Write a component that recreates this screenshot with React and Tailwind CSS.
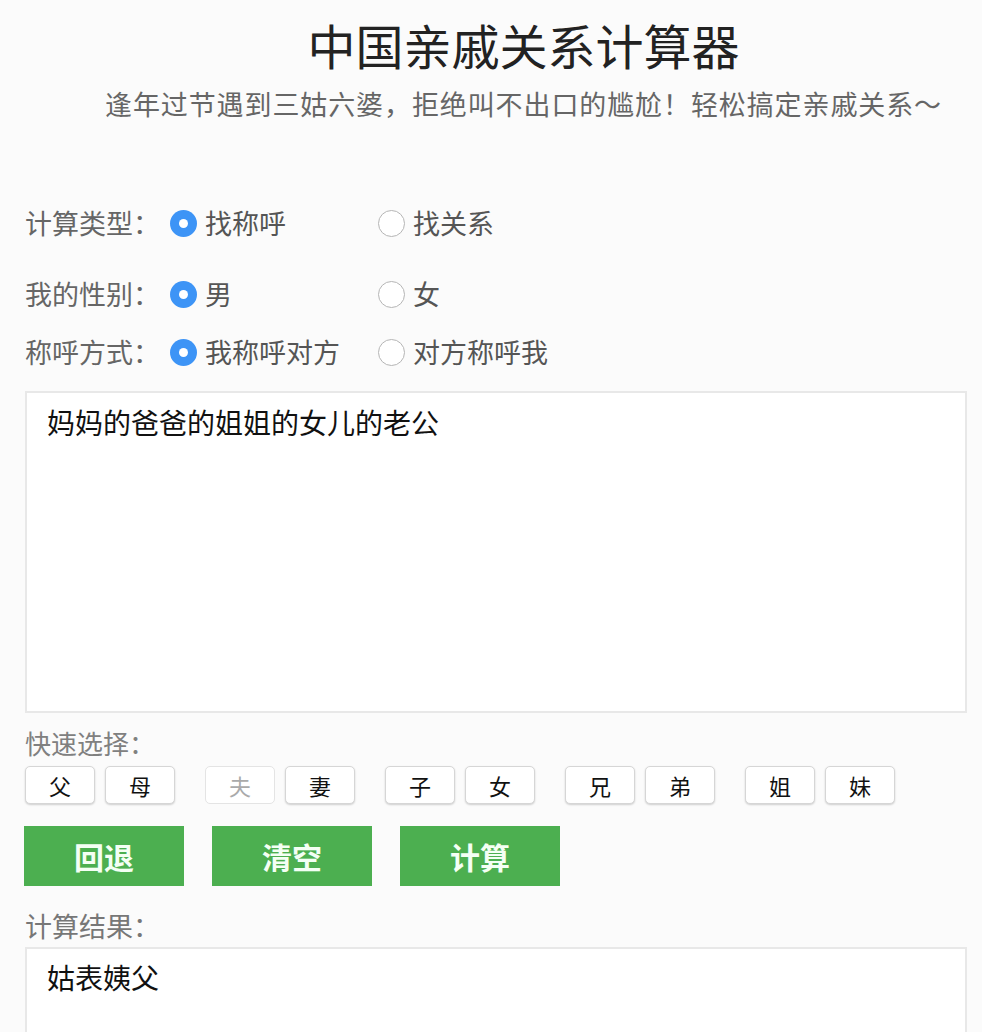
import React from "react";

const FONT = { fontFamily: '"Noto Sans CJK SC", "Noto Sans", sans-serif' };

function Radio({ checked, label, width }) {
  return (
    <label className={`flex items-center gap-[8px] ${width}`}>
      {checked ? (
        <span className="w-[27px] h-[27px] rounded-full bg-[#3d94f6] flex items-center justify-center shrink-0">
          <span className="w-[9px] h-[9px] rounded-full bg-white" />
        </span>
      ) : (
        <span className="w-[27px] h-[27px] rounded-full bg-white border border-[#b5b5b5] shrink-0" />
      )}
      <span className="text-[27px] leading-[36px] text-[#555]">{label}</span>
    </label>
  );
}

function Row({ label, options, className }) {
  return (
    <div className={`flex items-center h-[40px] ${className}`}>
      <div className="w-[145px] text-[27px] leading-[36px] text-[#666]">{label}</div>
      <Radio checked label={options[0]} width="w-[208px]" />
      <Radio label={options[1]} />
    </div>
  );
}

function Key({ ch, disabled }) {
  return (
    <button
      className={`w-[70px] h-[38px] rounded-[5px] bg-white border shadow-[0_1px_2px_rgba(0,0,0,0.18)] text-[22px] leading-none ${
        disabled ? "text-[#aaa] border-[#e4e4e4] shadow-none" : "text-[#111] border-[#d6d6d6]"
      }`}
    >
      {ch}
    </button>
  );
}

export default function App() {
  const groups = [
    [{ ch: "父" }, { ch: "母" }],
    [{ ch: "夫", disabled: true }, { ch: "妻" }],
    [{ ch: "子" }, { ch: "女" }],
    [{ ch: "兄" }, { ch: "弟" }],
    [{ ch: "姐" }, { ch: "妹" }],
  ];

  return (
    <div className="h-[1032px] bg-[#fbfbfb] pl-[25px] pr-[15px] overflow-hidden" style={FONT}>
      <div className="pt-[18px] pl-[55px] text-center">
        <h1 className="text-[48px] leading-[52px] text-[#222] font-normal">中国亲戚关系计算器</h1>
        <p className="mt-[18px] text-[27px] leading-[32px] text-[#666] tracking-[0.9px]">
          逢年过节遇到三姑六婆，拒绝叫不出口的尴尬！轻松搞定亲戚关系～
        </p>
      </div>

      <Row label="计算类型：" options={["找称呼", "找关系"]} className="mt-[83px]" />
      <Row label="我的性别：" options={["男", "女"]} className="mt-[31px]" />
      <Row label="称呼方式：" options={["我称呼对方", "对方称呼我"]} className="mt-[18px]" />

      <div className="mt-[19px] h-[322px] bg-white border-2 border-[#e8e8e8] px-[20px] pt-[11px] text-[28px] leading-[36px] text-[#111]">
        妈妈的爸爸的姐姐的女儿的老公
      </div>

      <div className="mt-[15px] text-[26px] leading-[30px] text-[#808080]">快速选择：</div>
      <div className="mt-[8px] flex gap-[30px]">
        {groups.map((g, i) => (
          <div key={i} className="flex gap-[10px]">
            {g.map((k) => (
              <Key key={k.ch} ch={k.ch} disabled={k.disabled} />
            ))}
          </div>
        ))}
      </div>

      <div className="mt-[22px] flex gap-[28px] -ml-[1px]">
        {["回退", "清空", "计算"].map((t) => (
          <button
            key={t}
            className="w-[160px] h-[60px] bg-[#4caf50] text-[#f4fff4] text-[30px] font-bold leading-none"
          >
            {t}
          </button>
        ))}
      </div>

      <div className="mt-[25px] text-[27px] leading-[30px] text-[#777]">计算结果：</div>
      <div className="mt-[6px] h-[150px] bg-white border-2 border-[#e8e8e8] px-[20px] pt-[10px] text-[28px] leading-[36px] text-[#111]">
        姑表姨父
      </div>
    </div>
  );
}
